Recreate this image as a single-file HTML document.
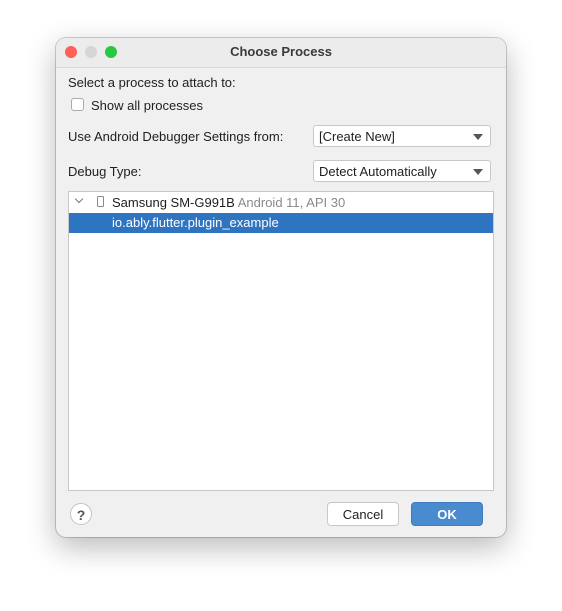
<!DOCTYPE html><html><head><style>
body{margin:0;width:562px;height:611px;background:#fff;font-family:"Liberation Sans",sans-serif;font-size:13px;color:#1e1e1e;position:relative;overflow:hidden}
.win{position:absolute;left:56px;top:38px;width:450px;height:499px;background:#f0f0f0;border-radius:10px;box-shadow:0 10px 30px rgba(0,0,0,.28),0 0 0 1px rgba(0,0,0,.18);overflow:hidden}
.tb{height:29px;border-bottom:1px solid #d8d8d8;background:#ececec;text-align:center;font-weight:bold;line-height:28px;color:#3a3a3a}
.dot{position:absolute;top:8px;width:12px;height:12px;border-radius:50%}
.a{position:absolute;white-space:nowrap}
.dd{position:absolute;left:257px;width:178px;height:22px;background:#fff;border:1px solid #c8c8c8;border-radius:3px;line-height:21px;padding-left:5px;box-sizing:border-box}
.dd:after{content:"";position:absolute;right:7px;top:8px;border-left:5px solid transparent;border-right:5px solid transparent;border-top:6px solid #555}
.btn{position:absolute;top:464px;height:24px;border-radius:4px;text-align:center;line-height:24px;box-sizing:border-box}
</style></head><body>
<div class="win">
<div class="tb">Choose Process</div>
<div class="dot" style="left:9px;background:#fe5f57"></div>
<div class="dot" style="left:29px;background:#d5d5d5"></div>
<div class="dot" style="left:49px;background:#28c840"></div>
<div class="a" style="left:12px;top:37px">Select a process to attach to:</div>
<div class="a" style="left:15px;top:60px;width:13px;height:13px;border:1px solid #aaa;border-radius:3px;background:#fff;box-sizing:border-box"></div>
<div class="a" style="left:35px;top:60px">Show all processes</div>
<div class="a" style="left:12px;top:91px">Use Android Debugger Settings from:</div>
<div class="dd" style="top:87px">[Create New]</div>
<div class="a" style="left:12px;top:126px">Debug Type:</div>
<div class="dd" style="top:122px">Detect Automatically</div>
<div class="a" style="left:12px;top:153px;width:426px;height:300px;background:#fff;border:1px solid #c8c8c8;box-sizing:border-box">
<div class="a" style="left:7px;top:4px;width:5px;height:5px;border-right:1.2px solid #777;border-bottom:1.2px solid #777;transform:rotate(45deg)"></div>
<div class="a" style="left:28px;top:4px;width:7px;height:11px;border:1.2px solid #888;border-radius:1.5px;box-sizing:border-box"></div>
<div class="a" style="left:43px;top:3px">Samsung SM-G991B <span style="color:#8a8a8a">Android 11, API 30</span></div>
<div class="a" style="left:0;top:21px;width:424px;height:20px;background:#2f74c0;color:#fff;line-height:20px;padding-left:43px;box-sizing:border-box">io.ably.flutter.plugin_example</div>
</div>
<div class="a" style="left:14px;top:465px;width:22px;height:22px;border:1px solid #c4c4c4;border-radius:50%;background:#fff;text-align:center;line-height:22px;font-weight:bold;color:#555;font-size:14px;box-sizing:border-box">?</div>
<div class="btn" style="left:271px;width:72px;background:#fff;border:1px solid #c8c8c8">Cancel</div>
<div class="btn" style="left:355px;width:72px;background:#4a8bd0;color:#fff;font-weight:bold;border:1px solid #3d7cc0">OK</div>
</div>
</body></html>
